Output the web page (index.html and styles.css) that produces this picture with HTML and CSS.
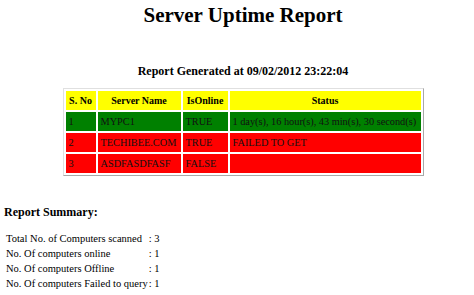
FILE: index.html
```html
<!DOCTYPE html>
<html>
<head>
<meta charset="utf-8">
<link rel="stylesheet" href="styles.css">
</head>
<body>
<div class="report">
  <h1 class="title">Server Uptime Report</h1>
  <h2 class="generated">Report Generated at 09/02/2012 23:22:04</h2>
  <table class="grid">
    <tr class="head">
      <th class="c-no">S. No</th>
      <th class="c-name">Server Name</th>
      <th class="c-online">IsOnline</th>
      <th class="c-status">Status</th>
    </tr>
    <tr class="ok">
      <td>1</td>
      <td>MYPC1</td>
      <td>TRUE</td>
      <td>1 day(s), 16 hour(s), 43 min(s), 30 second(s)</td>
    </tr>
    <tr class="bad">
      <td>2</td>
      <td>TECHIBEE.COM</td>
      <td>TRUE</td>
      <td>FAILED TO GET</td>
    </tr>
    <tr class="bad">
      <td>3</td>
      <td>ASDFASDFASF</td>
      <td>FALSE</td>
      <td></td>
    </tr>
  </table>
</div>
<div class="summary">
  <h3 class="summary-title">Report Summary:</h3>
  <table class="stats">
    <tr><td>Total No. of Computers scanned</td><td>: 3</td></tr>
    <tr><td>No. Of computers online</td><td>: 1</td></tr>
    <tr><td>No. Of computers Offline</td><td>: 1</td></tr>
    <tr><td>No. Of computers Failed to query</td><td>: 1</td></tr>
  </table>
</div>
</body>
</html>
```
FILE: styles.css
```css
html, body {
  margin: 0;
  padding: 0;
  background: #fff;
}
body {
  font-family: "Liberation Serif", "Times New Roman", serif;
  color: #000;
}
.report {
  padding-left: 12px;
  text-align: center;
}
.title {
  margin: 0;
  padding-top: 3px;
  font-size: 21px;
  line-height: 24px;
  font-weight: bold;
}
.generated {
  margin: 37px 0 0;
  font-size: 12px;
  line-height: 15px;
  font-weight: bold;
}
.grid {
  margin: 9px auto 0;
  border-collapse: separate;
  border-spacing: 2px;
  border: 1px solid;
  border-color: #e0e0e0 #a8a8a8 #a8a8a8 #e0e0e0;
  table-layout: fixed;
  font-size: 10.3px;
}
.grid th, .grid td {
  padding: 0 3px;
  height: 19px;
  border: 0;
  white-space: nowrap;
  overflow: hidden;
}
.grid th {
  background: #ffff00;
  font-weight: bold;
  font-size: 10px;
  text-align: center;
}
.grid td {
  text-align: left;
  color: #111;
}
.grid .c-no { width: 24px; }
.grid .c-name { width: 77px; }
.grid .c-online { width: 39px; }
.grid .c-status { width: 185px; }
.ok td { background: #008000; }
.bad td { background: #ff0000; }
.summary {
  padding-left: 4px;
}
.summary-title {
  margin: 29px 0 0;
  font-size: 12px;
  line-height: 15px;
  font-weight: bold;
}
.stats {
  margin-top: 11px;
  border-collapse: collapse;
  font-size: 10.5px;
}
.stats td {
  padding: 0 0 0 2px;
  height: 15px;
  line-height: 15px;
  white-space: nowrap;
}
.stats td + td {
  padding-left: 1px;
}
```
